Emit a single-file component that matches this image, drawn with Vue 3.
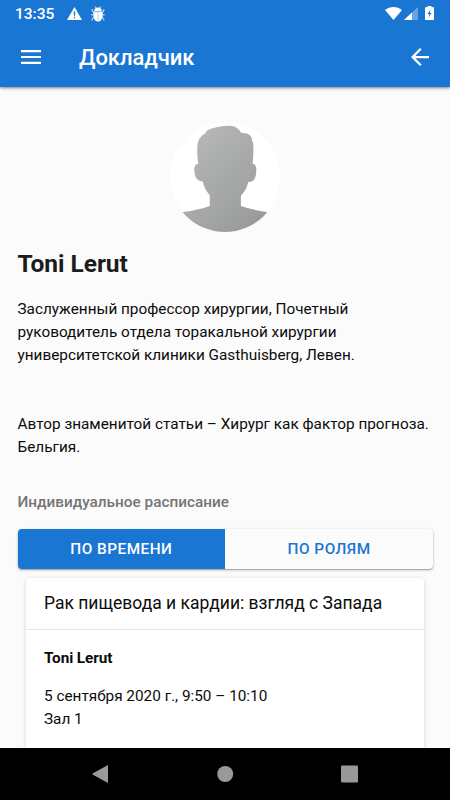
<template>
  <div class="screen">
    <header class="header">
      <!-- System status bar -->
      <div class="status-bar">
        <span class="clock">13:35</span>
        <svg class="warning" viewBox="0 0 15 13">
          <path d="M7.5 0 15 13H0z" fill="#fff" />
          <path d="M7.5 4.2v4.6M7.5 9.8v1.5" stroke="#1976d2" stroke-width="1.3" />
        </svg>
        <svg class="bug" viewBox="0 0 14 16">
          <path d="M4.2.5 5.400 2.500M9.800.5 8.600 2.500M1.200 3v2.200L3 6.500M12.800 3v2.200L11 6.500M.2 8.800h13.600M1.200 14.500v-2L3 11.200M12.800 14.500v-2L11 11.200" fill="none" stroke="#fff" stroke-width="1" opacity=".85" />
          <path d="M3.200 5a3.800 3.600 0 0 1 7.600 0z" fill="#fff" />
          <path d="M2.400 5.600h9.200v4.600a4.600 5.300 0 0 1-9.200 0z" fill="#fff" />
          <path d="M7 5.600v8.600" stroke="#1976d2" stroke-width=".7" opacity=".5" />
        </svg>
        <div class="status-right">
          <svg class="wifi" viewBox="0 0 17 13">
            <path d="M0 3C4.800-1 12.200-1 17 3L8.500 13z" fill="#fff" />
          </svg>
          <svg class="signal" viewBox="0 0 14 13">
            <path d="M14 0v13H0z" fill="#fff" opacity=".35" />
            <path d="M8 5.600V13H0z" fill="#fff" />
          </svg>
          <svg class="battery" viewBox="0 0 9 14">
            <path d="M2.500 0h4v1.300H9V14H0V1.300h2.500z" fill="#fff" />
            <path d="M5.400 3.500 2.500 8h1.800l-.7 3.500L6.600 7H4.900z" fill="#1976d2" />
          </svg>
        </div>
      </div>
      <!-- Toolbar -->
      <div class="toolbar">
        <button class="icon-btn" aria-label="Меню">
          <svg class="menu-icon" viewBox="0 0 20 14">
            <path d="M0 0h20v2.200H0zM0 5.900h20v2.200H0zM0 11.800h20V14H0z" fill="#fff" />
          </svg>
        </button>
        <h1 class="title">Докладчик</h1>
        <button class="icon-btn back" aria-label="Назад">
          <svg class="back-icon" viewBox="4 4 16 16">
            <path d="M20 11H7.830l5.590-5.590L12 4l-8 8 8 8 1.410-1.410L7.830 13H20v-2z" fill="#fff" />
          </svg>
        </button>
      </div>
    </header>

    <main class="page">
      <div class="avatar">
        <svg viewBox="46 37 329 329">
          <defs>
            <linearGradient id="shade" x1="0" y1="0" x2="1" y2="1">
              <stop offset="0" stop-color="#bcbdbd" />
              <stop offset="1" stop-color="#939494" />
            </linearGradient>
          </defs>
          <path
            fill="url(#shade)"
            d="M40 322 86 306Q130 300 165 288V257C154 242 147 231 144 215Q126 214 121 197C116 178 119 162 131 163C127 143 127 122 128 106C130 88 140 77 154 70L151 67Q164 56 178 54Q201 48 222 48C241 47 252 58 260 70Q278 68 287 79Q293 87 290 91L294 97C297 117 295 143 293 163C303 161 306 174 303 194C300 211 292 217 280 216C276 235 269 246 258 258V288Q292 300 335 306L380 322V370H40Z"
          />
        </svg>
      </div>

      <h2 class="name">{{ speaker.name }}</h2>
      <p v-for="text in speaker.about" :key="text" class="about">{{ text }}</p>

      <h3 class="subtitle">Индивидуальное расписание</h3>
      <div class="tabs">
        <button
          v-for="tab in tabs"
          :key="tab.id"
          :class="['tab', { active: activeTab === tab.id }]"
          @click="activeTab = tab.id"
        >
          {{ tab.label }}
        </button>
      </div>

      <section class="card">
        <div class="card-title">{{ talk.title }}</div>
        <div class="card-body">
          <div class="card-speaker">{{ speaker.name }}</div>
          <div>{{ talk.time }}</div>
          <div>{{ talk.hall }}</div>
        </div>
      </section>
    </main>

    <!-- Android navigation -->
    <nav class="nav-bar">
      <svg viewBox="0 0 17 18"><path d="M15 0v18L-.5 9.500v-1z" /></svg>
      <svg viewBox="0 0 17 18"><circle cx="8.200" cy="9" r="8" /></svg>
      <svg viewBox="0 0 17 18"><rect y=".5" width="17" height="17" rx="1" /></svg>
    </nav>
  </div>
</template>

<script setup>
import { ref } from 'vue';

const activeTab = ref('time');

const tabs = [
  { id: 'time', label: 'По времени' },
  { id: 'roles', label: 'По ролям' }
];

const speaker = {
  name: 'Toni Lerut',
  about: [
    'Заслуженный профессор хирургии, Почетный руководитель отдела торакальной хирургии университетской клиники Gasthuisberg, Левен.',
    'Автор знаменитой статьи – Хирург как фактор прогноза. Бельгия.'
  ]
};

const talk = {
  title: 'Рак пищевода и кардии: взгляд с Запада',
  time: '5 сентября 2020 г., 9:50 – 10:10',
  hall: 'Зал 1'
};
</script>

<style>
body {
  margin: 0;
  background: #fafafa;
}
</style>

<style scoped>
.screen {
  display: flex;
  flex-direction: column;
  width: 450px;
  height: 800px;
  overflow: hidden;
  background: #fbfbfb;
  color: #0c0c0c;
  font-family: Roboto, 'Noto Sans', sans-serif;
  font-size: 15.33px;
  line-height: 23px;
}

button {
  padding: 0;
  border: none;
  background: none;
  font-family: inherit;
  cursor: pointer;
}

svg {
  display: block;
}

.header {
  flex: none;
  height: 87px;
  background: #1976d2;
  color: #fff;
  box-shadow: 0 1px 4px rgba(0, 0, 0, 0.3), 0 1px 2px rgba(0, 0, 0, 0.25);
  z-index: 1;
}

.status-bar {
  display: flex;
  align-items: center;
  height: 27px;
  padding: 0 16px 0 15px;
}

.clock {
  width: 52px;
  padding-top: 1px;
  font-size: 15.5px;
  font-weight: 500;
}

.warning {
  width: 15px;
  height: 13px;
}

.bug {
  width: 14px;
  height: 16px;
  margin-left: 9px;
}

.status-right {
  display: flex;
  align-items: center;
  margin-left: auto;
}

.wifi {
  width: 17px;
  height: 13px;
  margin-top: -1px;
}

.signal {
  width: 14px;
  height: 13px;
  margin: 0 7px 0 2px;
}

.battery {
  width: 9px;
  height: 14px;
  margin-top: -1px;
}

.toolbar {
  display: flex;
  align-items: center;
  height: 60px;
  padding: 0 20px 0 21px;
}

.icon-btn {
  width: 20px;
}

.menu-icon {
  width: 20px;
  height: 14px;
}

.title {
  margin: 2px 0 0 38px;
  font-size: 22px;
  font-weight: 500;
  line-height: 32px;
  letter-spacing: -0.05px;
}

.back {
  margin-left: auto;
}

.back-icon {
  width: 18px;
  height: 18px;
  margin-left: 1px;
}

.page {
  flex: 1;
  min-height: 0;
  padding: 35px 17px 0 17.5px;
  overflow: hidden;
}

.avatar {
  width: 110px;
  height: 110px;
  margin: 0 auto;
  border-radius: 50%;
  background: #fff;
  overflow: hidden;
}

.name {
  margin: 14px 0 16px;
  color: #1b1c1b;
  font-size: 24.5px;
  font-weight: 700;
  line-height: 36px;
  letter-spacing: -0.05px;
}

.about {
  margin: 0 0 46px;
}

.subtitle {
  margin: -15px 0 15px;
  color: #757575;
  font-size: 15.33px;
  font-weight: 500;
  line-height: 24px;
}

.tabs {
  display: flex;
  height: 39.5px;
  border-radius: 4px;
  box-shadow: 0 1px 3px rgba(0, 0, 0, 0.25), 0 1px 1px rgba(0, 0, 0, 0.2);
  overflow: hidden;
}

.tab {
  flex: 1;
  color: #1976d2;
  font-size: 15.33px;
  font-weight: 500;
  text-transform: uppercase;
  letter-spacing: 0.5px;
}

.tab.active {
  background: #1976d2;
  color: #fff;
}

.card {
  height: 260px;
  margin: 9px 9px 0 8.5px;
  border-radius: 4px;
  background: #fff;
  box-shadow: 0 1px 4px rgba(0, 0, 0, 0.17);
}

.card-title {
  padding: 12px 18px 13px;
  border-bottom: 1px solid #e6e6e6;
  font-size: 17.5px;
  line-height: 26px;
}

.card-body {
  padding: 17px 18px;
}

.card-speaker {
  margin-bottom: 15px;
  font-weight: 700;
  letter-spacing: -0.1px;
}

.nav-bar {
  display: flex;
  flex: none;
  align-items: center;
  justify-content: center;
  gap: 107px;
  height: 52px;
  background: #000;
  z-index: 1;
}

.nav-bar svg {
  width: 17px;
  height: 18px;
  overflow: visible;
  fill: #999;
}
</style>
